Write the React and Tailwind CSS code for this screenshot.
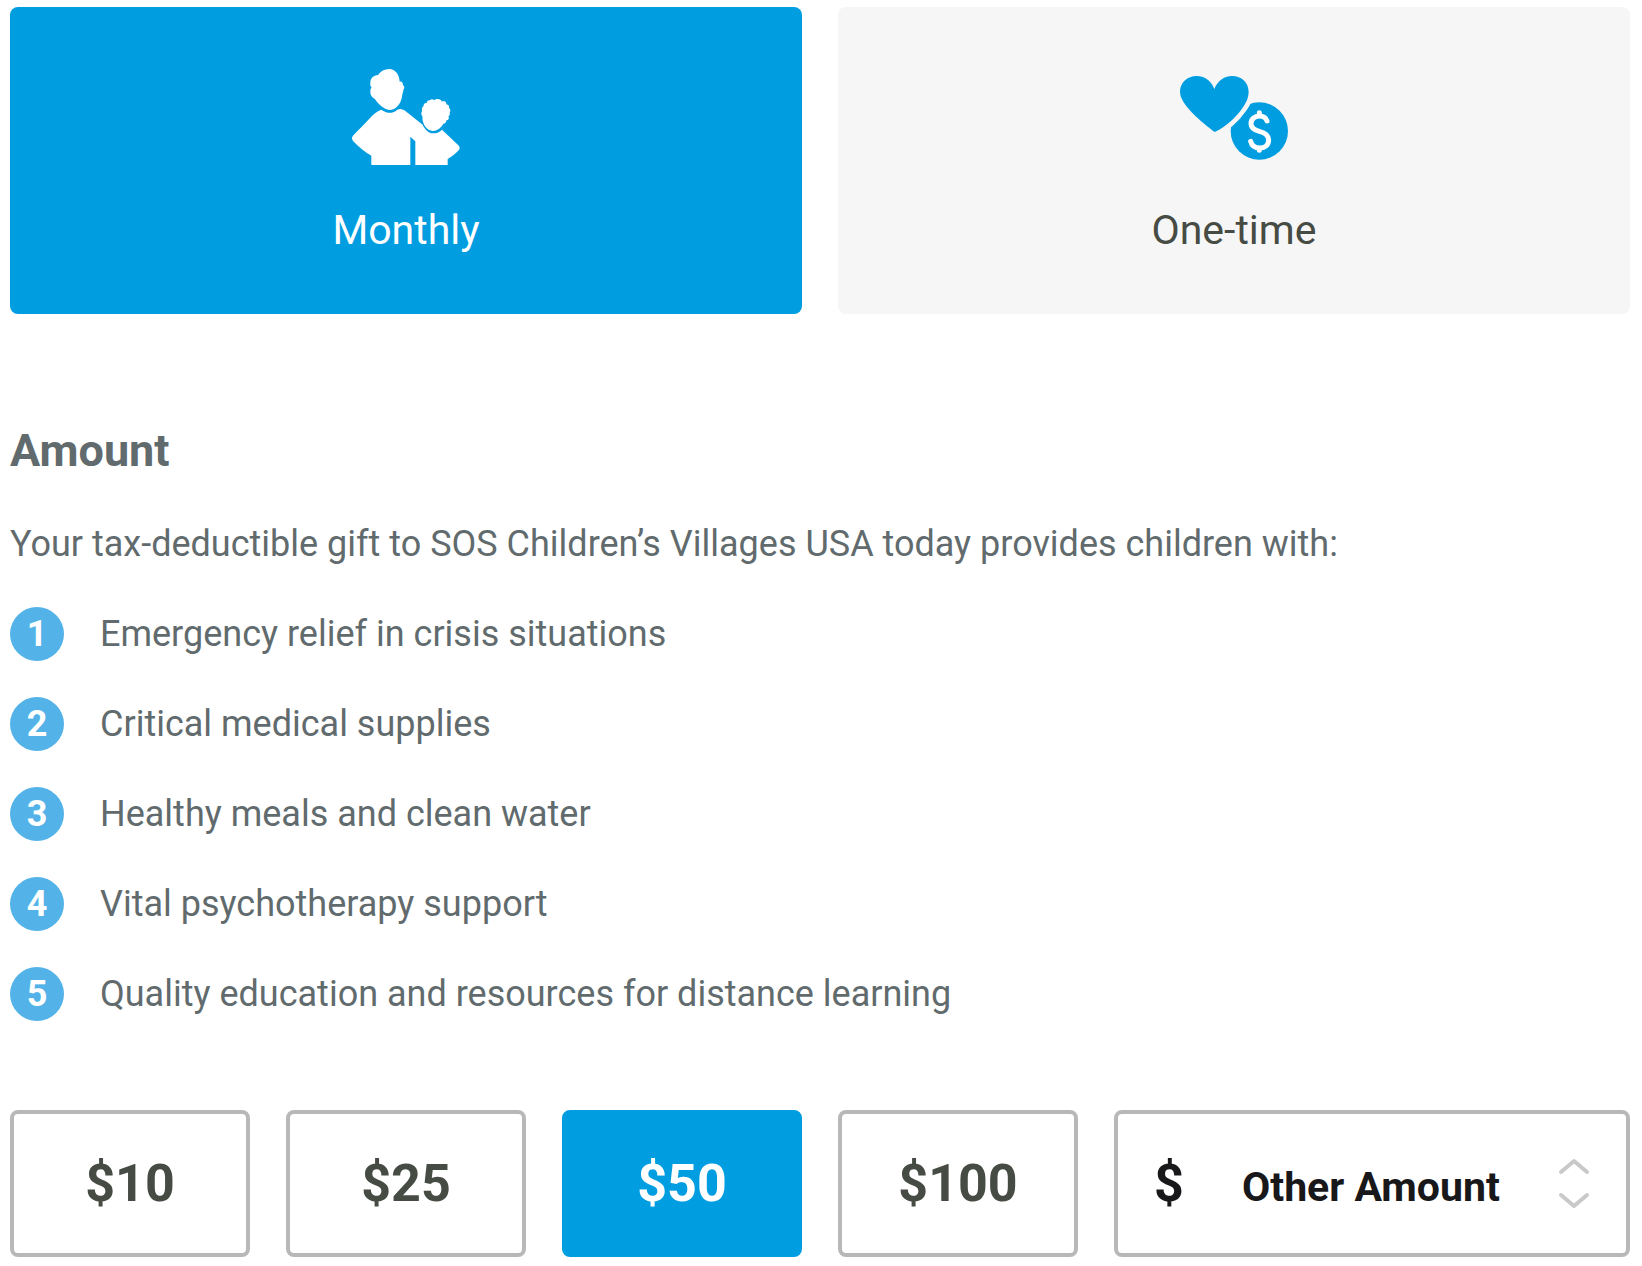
import { useState } from "react";

const frequencies = [
  { id: "monthly", label: "Monthly", Icon: FamilyIcon },
  { id: "one-time", label: "One-time", Icon: HeartCoinIcon },
];

const benefits = [
  "Emergency relief in crisis situations",
  "Critical medical supplies",
  "Healthy meals and clean water",
  "Vital psychotherapy support",
  "Quality education and resources for distance learning",
];

const amounts = [10, 25, 50, 100];

function FamilyIcon() {
  return (
    <svg
      viewBox="66 57 324 288"
      className="h-24 w-[108px]"
      fill="currentColor"
      aria-hidden="true"
    >
      {/* adult */}
      <path d="M144 75 C152 63 163 57 178 57 C196 58 208 73 209 95 C216 94 219 98 219 106 C224 108 224 114 220 120 C220 126 218 128 217 134 C215 150 210 160 203 168 C196 176 188 180 178 180 C162 177 145 163 134 146 C126 143 120 134 121 123 C121 119 122 116 125 112 C121 109 120 105 121 98 C121 85 130 76 144 75Z" />
      <path d="M154 179 C170 191 188 192 202 179 C212 175 220 179 227 184 L278 224 C284 238 296 250 310 250 C321 250 329 246 336 239 L385 286 C390 291 390 296 386 301 C376 311 366 320 353 327 L353 345 L256 345 L256 274 L241 260 L241 345 L124 345 L124 317 C105 307 86 290 69 273 C65 268 65 262 69 257 C86 238 102 224 118 206 C130 193 140 184 154 179Z" />
      {/* child */}
      <path d="M300 151 C304 146 309 147 312 151 C317 146 327 146 331 149 C335 150 334 153 335 155 C341 151 349 154 349 163 C355 164 359 168 357 174 C362 176 362 185 359 188 C361 193 358 198 355 199 C359 206 355 211 349 211 C349 217 346 222 340 221 C334 232 323 242 310 243 C293 242 283 229 279 216 C277 210 278 204 277 198 C272 195 274 187 276 184 C275 177 276 169 281 168 C280 163 284 158 291 158 C290 153 295 150 300 151Z" />
    </svg>
  );
}

function HeartCoinIcon() {
  const heart =
    "M163 87 C174 60 194 48 216 48 C245 48 266 68 266 96 C266 112 259 128 248 143 C229 170 202 198 164 216 C127 187 60 135 60 95 C60 68 82 48 110 48 C132 48 153 60 163 87Z";
  return (
    <svg viewBox="60 42 324 258" className="h-[86px] w-[108px]" aria-hidden="true">
      <mask id="coin-mask" maskUnits="userSpaceOnUse" x="60" y="42" width="324" height="258">
        <rect x="60" y="42" width="324" height="258" fill="white" />
        <path d={heart} fill="black" stroke="black" strokeWidth="28" />
      </mask>
      <circle cx="298" cy="213" r="86" fill="#009de0" mask="url(#coin-mask)" />
      <path d={heart} fill="#009de0" />
      <path
        d="M298 158 V168 M298 265 V271 M321 183 C318 174 310 168 298 168 C284 168 273 178 273 191 C273 205 284 210 298 214 C314 218 326 224 326 240 C326 255 315 264 299 264 C284 264 275 256 272 244"
        fill="none"
        stroke="white"
        strokeWidth="15"
        strokeLinecap="round"
      />
    </svg>
  );
}

function Chevron({ d }) {
  return (
    <svg viewBox="0 0 32 18" className="h-[18px] w-8" fill="none" aria-hidden="true">
      <path d={d} stroke="#c9c9c9" strokeWidth="4" strokeLinecap="round" strokeLinejoin="round" />
    </svg>
  );
}

export default function App() {
  const [frequency, setFrequency] = useState("monthly");
  const [amount, setAmount] = useState(50);
  const [other, setOther] = useState("");

  const step = (by) => {
    setAmount(null);
    setOther(String(Math.max(0, (Number(other) || 0) + by)));
  };

  return (
    <main className="bg-white pt-[7px] pr-3 pb-2 pl-2.5 font-['Roboto',sans-serif] text-[#616b6d]">
      {/* Frequency */}
      <div className="grid grid-cols-2 gap-9">
        {frequencies.map(({ id, label, Icon }) => (
          <button
            key={id}
            type="button"
            aria-pressed={frequency === id}
            onClick={() => setFrequency(id)}
            className={`flex flex-col items-center gap-[41px] rounded-lg pt-[62px] pb-[60px] text-[41px] leading-[48px] ${
              frequency === id ? "bg-[#009de0] text-white" : "bg-[#f6f6f6] text-[#464b43]"
            }`}
          >
            <span className="flex h-24 items-center">
              <Icon />
            </span>
            {label}
          </button>
        ))}
      </div>

      {/* Amount */}
      <section className="mt-[111px]">
        <h2 className="text-[45px] leading-[52px] font-bold">Amount</h2>
        <p className="mt-10 text-[36px] leading-[54px]">
          Your tax-deductible gift to SOS Children’s Villages USA today provides children with:
        </p>
        <ol className="mt-9 flex flex-col gap-9">
          {benefits.map((benefit, i) => (
            <li key={benefit} className="flex items-center gap-9 text-[36px] leading-[54px]">
              <span className="flex size-[54px] shrink-0 items-center justify-center rounded-full bg-[#53b2e8] font-bold text-white">
                {i + 1}
              </span>
              {benefit}
            </li>
          ))}
        </ol>

        <div className="mt-[89px] grid grid-cols-6 gap-9">
          {amounts.map((value) => (
            <button
              key={value}
              type="button"
              aria-pressed={amount === value}
              onClick={() => setAmount(value)}
              className={`h-[147px] rounded-lg border-4 text-[52px] font-bold ${
                amount === value
                  ? "border-[#009de0] bg-[#009de0] text-white"
                  : "border-[#b8b8b8] bg-white text-[#464b43]"
              }`}
            >
              ${value}
            </button>
          ))}
          <div className="col-span-2 flex h-[147px] items-center rounded-lg border-4 border-[#b8b8b8] px-9 font-bold text-[#18171a]">
            <label htmlFor="other-amount" className="w-[88px] shrink-0 text-[52px]">
              $
            </label>
            <input
              id="other-amount"
              type="text"
              inputMode="numeric"
              placeholder="Other Amount"
              aria-label="Other Amount"
              value={other}
              onChange={(e) => {
                setAmount(null);
                setOther(e.target.value);
              }}
              className="min-w-0 flex-1 pt-1.5 text-[41px] leading-[48px] outline-none placeholder:text-[#18171a] placeholder:opacity-100"
            />
            <div className="flex flex-col gap-4">
              <button type="button" aria-label="Increase amount" onClick={() => step(1)}>
                <Chevron d="M3 14 L16 3 L29 14" />
              </button>
              <button type="button" aria-label="Decrease amount" onClick={() => step(-1)}>
                <Chevron d="M3 3 L16 14 L29 3" />
              </button>
            </div>
          </div>
        </div>
      </section>
    </main>
  );
}
